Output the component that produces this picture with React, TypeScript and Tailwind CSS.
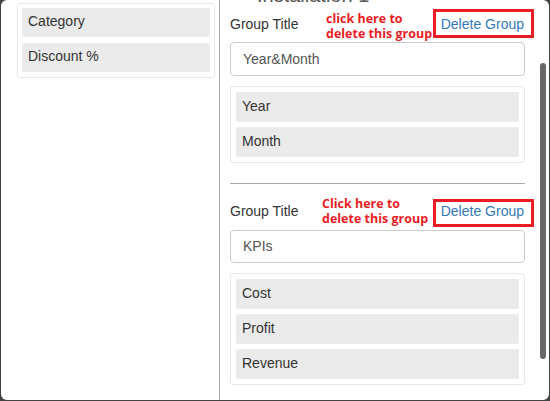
import React from "react";

const Item = ({ label }: { label: string }) => (
  <div className="h-[30px] bg-[#ebebeb] rounded-[2px] flex items-center pl-[6px] pb-[2px] text-[14px] text-[#333]">
    {label}
  </div>
);

const Group = ({
  title,
  note1,
  items,
  first,
}: {
  title: string;
  note1: string;
  items: string[];
  first?: boolean;
}) => (
  <div className="flex flex-col">
    <div
      className={`relative h-[30px] flex items-center justify-between text-[14px] ${
        first ? "mt-[7px]" : "mt-[12px]"
      }`}
    >
      <span className="text-[#333]">Group Title</span>
      <span className="text-[#337ab7] pr-[1px]">Delete Group</span>
      <div
        className={`absolute ${first ? "left-[96px] top-[3px]" : "left-[92px] top-[1px]"} text-[#ec1c24] font-bold text-[12.5px] leading-[14.5px] whitespace-nowrap`}
        style={{ fontFamily: '"Open Sans", sans-serif' }}
      >
        <div>{note1}</div>
        <div>delete this group</div>
      </div>
      <div
        className={`absolute left-[203px] ${first ? "top-[0px] h-[29px]" : "top-[3px] h-[28px]"} w-[101px] border-[3px] border-[#ec1c24]`}
      />
    </div>
    <div
      className={`${first ? "mt-[3px] h-[34px]" : "mt-[4px] h-[33px]"} border border-[#ccc] rounded-[4px] flex items-center pl-[12px] text-[14px] text-[#555]`}
    >
      {title}
    </div>
    <div className="mt-[10px] border border-[#e8e8e8] rounded-[3px] p-[5px] flex flex-col gap-[5px]">
      {items.map((i) => (
        <Item key={i} label={i} />
      ))}
    </div>
  </div>
);

export default function App() {
  return (
    <div
      className="w-[550px] h-[401px] bg-[#444] overflow-hidden"
      style={{ fontFamily: '"Liberation Sans", Arial, sans-serif' }}
    >
      <div className="ml-[1px] w-[548px] h-[400px] bg-white rounded-[6px] flex overflow-hidden">
        <div className="w-[219px] shrink-0 border-r border-[#a8a8a8]">
          <div className="ml-[16px] mt-[3px] w-[198px] border border-[#e8e8e8] rounded-[3px] p-[4px] pb-[5px] flex flex-col gap-[6px]">
            <div className="h-[29px] bg-[#ebebeb] rounded-[2px] flex items-center pl-[6px] pb-[2px] text-[14px] text-[#333]">
              Category
            </div>
            <div className="h-[29px] bg-[#ebebeb] rounded-[2px] flex items-center pl-[6px] pb-[2px] text-[14px] text-[#333]">
              Discount %
            </div>
          </div>
        </div>
        <div className="flex-1 flex relative">
          <div className="w-[295px] ml-[10px] flex flex-col">
            <div className="h-[2px] overflow-hidden">
              <div className="mt-[-16px] text-[20px] leading-[22px] text-[#555] pl-[27px]">
                Installation 1
              </div>
            </div>
            <Group
              first
              title="Year&Month"
              note1="click here to"
              items={["Year", "Month"]}
            />
            <div className="mt-[20px] h-px bg-[#aaa]" />
            <Group
              title="KPIs"
              note1="Click here to"
              items={["Cost", "Profit", "Revenue"]}
            />
          </div>
          <div className="absolute left-[320px] top-[63px] w-[6px] h-[296px] bg-[#686868] rounded-[3px]" />
        </div>
      </div>
    </div>
  );
}
